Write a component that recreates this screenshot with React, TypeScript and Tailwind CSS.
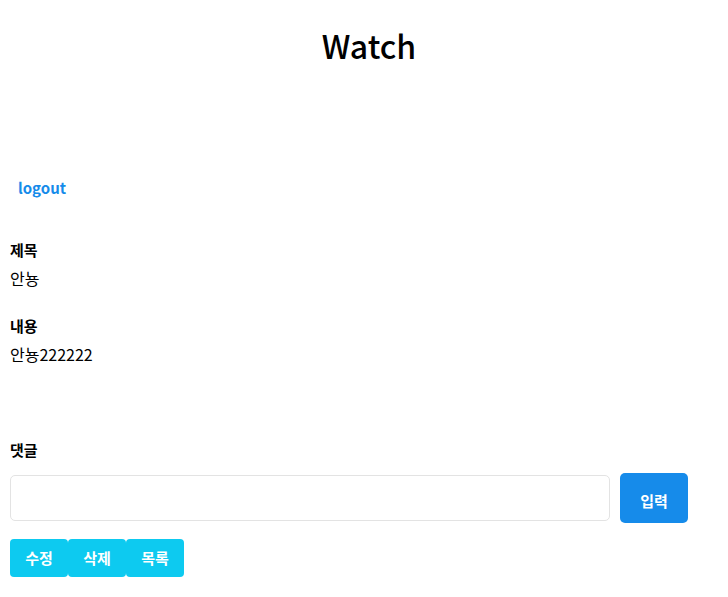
import React from "react";

const font = { fontFamily: '"Noto Sans CJK KR", "Noto Sans", sans-serif' };

function Field({ label, value }: { label: string; value: string }) {
  return (
    <div className="mb-[22px]">
      <div className="text-[15px] font-bold leading-[26px] text-black">{label}</div>
      <div className="mt-[2px] text-[16px] leading-[26px] text-black">{value}</div>
    </div>
  );
}

export default function App() {
  return (
    <div className="min-h-screen bg-white" style={font}>
      <h1 className="pt-[22px] text-center text-[32px] font-medium leading-[46px] text-black pl-[10px]">
        Watch
      </h1>

      <div className="mt-[107px] px-[18px]">
        <a href="#" className="text-[15px] font-bold leading-[26px] text-[#168bea]">
          logout
        </a>
      </div>

      <div className="mt-[36px] px-[10px]">
        <Field label="제목" value="안뇽" />
        <Field label="내용" value="안뇽222222" />

        <div className="mt-[70px] text-[15px] font-bold leading-[26px] text-black">댓글</div>

        <div className="mt-[10px] flex items-start gap-[10px] pr-[30px]">
          <input
            type="text"
            className="mt-[2px] h-[46px] flex-1 rounded-[5px] border border-[#e3e3e3] px-3 outline-none"
          />
          <button className="flex h-[50px] w-[68px] items-end justify-center rounded-[5px] bg-[#168bea] pb-[11px] text-[15px] font-bold text-white">
            입력
          </button>
        </div>

        <div className="mt-[16px] flex">
          {["수정", "삭제", "목록"].map((t) => (
            <button
              key={t}
              className="h-[38px] w-[58px] rounded-[4px] bg-[#0dcaf0] text-[15px] font-bold text-white"
            >
              {t}
            </button>
          ))}
        </div>
      </div>
    </div>
  );
}
